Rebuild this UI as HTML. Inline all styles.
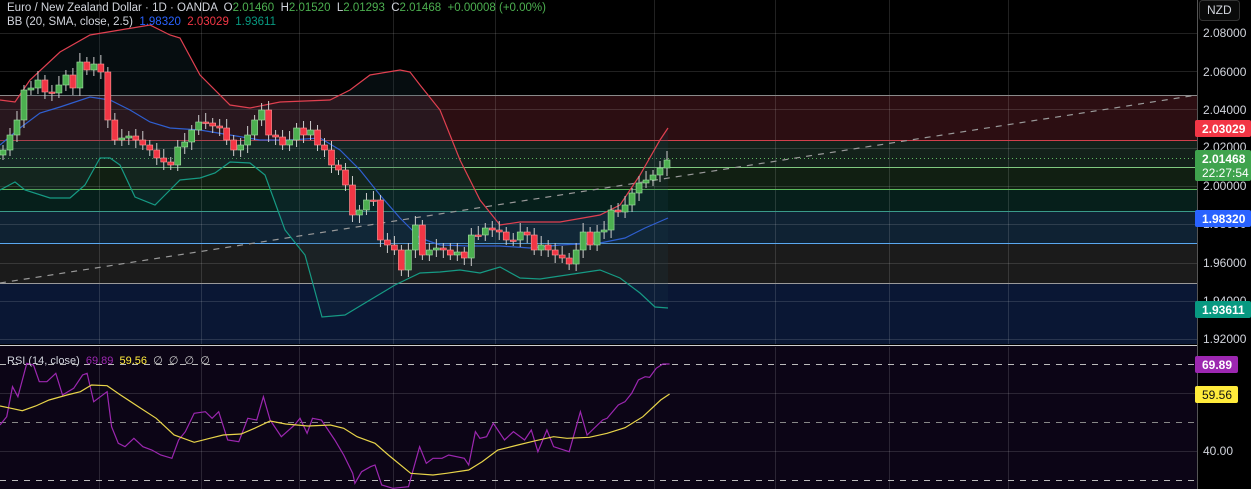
<!DOCTYPE html>
<html><head><meta charset="utf-8"><style>
body{margin:0;background:#000;width:1251px;height:489px;overflow:hidden;font-family:"Liberation Sans",sans-serif}
svg{position:absolute;left:0;top:0}
.leg{position:absolute;left:7px;font-size:11.5px;color:#d1d4dc;white-space:pre}
.ax{font-size:12px;fill:#d1d4dc}
</style></head><body>
<svg id="s" width="1251" height="489" xmlns="http://www.w3.org/2000/svg">
<rect width="1251" height="489" fill="#000"/>
<rect x="0" y="95" width="1197" height="45" fill="#2c0e12"/>
<rect x="0" y="140" width="1197" height="27" fill="#13211a"/>
<rect x="0" y="167" width="1197" height="22" fill="#111f12"/>
<rect x="0" y="189" width="1197" height="22" fill="#061f1b"/>
<rect x="0" y="211" width="1197" height="32" fill="#0f2233"/>
<rect x="0" y="243" width="1197" height="40" fill="#1b1b1b"/>
<rect x="0" y="283" width="1197" height="61" fill="#0a1734"/>
<g id="grid" stroke="#ffffff" stroke-opacity="0.13" stroke-width="1"></g>
<line x1="0" y1="95.5" x2="1197" y2="95.5" stroke="#8a8a8a"/>
<line x1="0" y1="140.5" x2="1197" y2="140.5" stroke="#d0404c"/>
<line x1="0" y1="158.5" x2="1197" y2="158.5" stroke="#5fb85f" stroke-dasharray="1 3"/>
<line x1="0" y1="167.5" x2="1197" y2="167.5" stroke="#80c880"/>
<line x1="0" y1="189.5" x2="1197" y2="189.5" stroke="#5cb85c"/>
<line x1="0" y1="211.5" x2="1197" y2="211.5" stroke="#3a9a8a"/>
<line x1="0" y1="243.5" x2="1197" y2="243.5" stroke="#5aa8f0"/>
<line x1="0" y1="283.5" x2="1197" y2="283.5" stroke="#9a9a9a"/>
<path id="bbfill" fill="#1a3a4a" fill-opacity="0.22"/>
<line x1="0" y1="283" x2="1197" y2="95" stroke="#999" stroke-dasharray="6 6" stroke-width="1.2"/>
<path id="up" fill="none" stroke="#e04050" stroke-width="1.2"/>
<path id="mid" fill="none" stroke="#2f5fd0" stroke-width="1.2"/>
<path id="lo" fill="none" stroke="#169a84" stroke-width="1.2"/>
<g id="candles"></g>
<rect x="0" y="346" width="1197" height="143" fill="#0c0516"/>
<line x1="0" y1="345.5" x2="1251" y2="345.5" stroke="#cfcfcf"/>
<line x1="0" y1="393.5" x2="1197" y2="393.5" stroke="#fff" stroke-opacity="0.13"/>
<line x1="0" y1="451.5" x2="1197" y2="451.5" stroke="#fff" stroke-opacity="0.13"/>
<line x1="0" y1="364.5" x2="1197" y2="364.5" stroke="#bbb" stroke-dasharray="6 6"/>
<line x1="0" y1="422.5" x2="1197" y2="422.5" stroke="#888" stroke-dasharray="6 6"/>
<line x1="0" y1="480.5" x2="1197" y2="480.5" stroke="#bbb" stroke-dasharray="6 6"/>
<g id="rgrid" stroke="#fff" stroke-opacity="0.13"></g>
<path id="rsi" fill="none" stroke="#9c27b0" stroke-width="1.2"/>
<path id="ma" fill="none" stroke="#e8d44a" stroke-width="1.2"/>
<rect x="1197" y="0" width="54" height="489" fill="#000"/>
<line x1="1197.5" y1="0" x2="1197.5" y2="489" stroke="#555"/>
<rect x="1199.5" y="0.5" width="40" height="20" rx="3" fill="#0a0a0a" stroke="#333"/>
<text x="1207" y="14" class="ax" font-size="11">NZD</text>
<text x="1203" y="37" class="ax">2.08000</text>
<text x="1203" y="76" class="ax">2.06000</text>
<text x="1203" y="114" class="ax">2.04000</text>
<text x="1203" y="151" class="ax">2.02000</text>
<text x="1203" y="190" class="ax">2.00000</text>
<text x="1203" y="228" class="ax">1.98000</text>
<text x="1203" y="267" class="ax">1.96000</text>
<text x="1203" y="305" class="ax">1.94000</text>
<text x="1203" y="343" class="ax">1.92000</text>
<text x="1203" y="455" class="ax">40.00</text>
<rect x="1195" y="120" width="56" height="17" rx="2" fill="#f23645"/>
<text x="1202" y="133" class="ax" style="fill:#fff" font-weight="bold">2.03029</text>
<rect x="1195" y="150" width="56" height="31" rx="2" fill="#3fa34d"/>
<text x="1202" y="163" class="ax" style="fill:#fff" font-weight="bold">2.01468</text>
<text x="1202" y="177" class="ax" style="fill:#fff">22:27:54</text>
<rect x="1195" y="210" width="56" height="17" rx="2" fill="#2962ff"/>
<text x="1202" y="223" class="ax" style="fill:#fff" font-weight="bold">1.98320</text>
<rect x="1195" y="301" width="56" height="17" rx="2" fill="#089981"/>
<text x="1202" y="314" class="ax" style="fill:#fff" font-weight="bold">1.93611</text>
<rect x="1195" y="356" width="43" height="17" rx="2" fill="#9c27b0"/>
<text x="1202" y="369" class="ax" style="fill:#fff" font-weight="bold">69.89</text>
<rect x="1195" y="386" width="43" height="17" rx="2" fill="#ffeb3b"/>
<text x="1202" y="399" class="ax" style="fill:#111">59.56</text>
</svg>
<div class="leg" style="top:2px">Euro / New Zealand Dollar · 1D · OANDA  O<span style="color:#4caf50">2.01460</span>  H<span style="color:#4caf50">2.01520</span>  L<span style="color:#4caf50">2.01293</span>  C<span style="color:#4caf50">2.01468</span>  <span style="color:#4caf50">+0.00008 (+0.00%)</span></div>
<div class="leg" style="top:16px">BB (20, SMA, close, 2.5)  <span style="color:#2962ff">1.98320</span>  <span style="color:#f23645">2.03029</span>  <span style="color:#089981">1.93611</span></div>
<div class="leg" style="top:354px;font-size:11px">RSI (14, close)  <span style="color:#9c27b0">69.89</span>  <span style="color:#ffeb3b">59.56</span>  <span style="color:#ccc">∅  ∅  ∅  ∅</span></div>
<script>
const NS="http://www.w3.org/2000/svg";
function P(pts){return pts.map((p,i)=>(i?"L":"M")+p[0]+" "+p[1]).join(" ");}
const g=document.getElementById("grid");
[99,201,299,393,495,654,775,889,1008].forEach(x=>{let l=document.createElementNS(NS,"line");l.setAttribute("x1",x+.5);l.setAttribute("x2",x+.5);l.setAttribute("y1",0);l.setAttribute("y2",344);g.appendChild(l);});
[33,71,109,148,186,224,263,301,339].forEach(y=>{let l=document.createElementNS(NS,"line");l.setAttribute("x1",0);l.setAttribute("x2",1197);l.setAttribute("y1",y+.5);l.setAttribute("y2",y+.5);g.appendChild(l);});
const rg=document.getElementById("rgrid");
[99,201,299,393,495,654,775,889,1008].forEach(x=>{let l=document.createElementNS(NS,"line");l.setAttribute("x1",x+.5);l.setAttribute("x2",x+.5);l.setAttribute("y1",347);l.setAttribute("y2",489);rg.appendChild(l);});
const up=[[0,100],[15,102],[30,80],[60,52],[90,35],[120,30],[150,25],[170,35],[180,38],[200,75],[230,105],[250,108],[280,102],[330,100],[350,90],[370,75],[400,70],[410,72],[420,85],[440,110],[460,160],[480,200],[500,225],[520,222],[560,222],[600,215],[620,205],[640,175],[660,140],[668,128]];
const mid=[[0,145],[20,128],[40,113],[60,107],[90,97],[110,100],[130,110],[150,122],[170,128],[200,130],[230,135],[260,140],[290,140],[320,138],[340,150],[360,170],[380,195],[400,218],[420,238],[440,245],[470,246],[500,246],[530,248],[560,245],[600,243],[625,238],[645,228],[668,218]];
const lo=[[0,190],[15,182],[25,190],[50,198],[70,198],[85,185],[100,158],[110,158],[120,165],[135,197],[155,205],[165,195],[180,180],[200,178],[215,173],[230,162],[250,163],[265,175],[285,230],[305,255],[322,317],[345,315],[370,300],[395,285],[420,273],[440,272],[460,270],[480,273],[500,267],[520,278],[540,279],[560,276],[600,270],[620,278],[640,293],[655,307],[668,308]];
document.getElementById("up").setAttribute("d",P(up));
document.getElementById("mid").setAttribute("d",P(mid));
document.getElementById("lo").setAttribute("d",P(lo));
document.getElementById("bbfill").setAttribute("d",P(up)+" "+P(lo.slice().reverse()).replace("M","L")+" Z");
const cl=[150,135,120,90,88,80,92,93,85,75,88,62,70,64,72,120,140,138,136,140,145,150,158,162,165,147,142,130,122,123,126,128,140,150,145,135,120,110,135,137,145,140,128,135,130,145,150,165,170,185,215,210,200,200,240,245,250,270,250,225,255,250,248,250,255,252,258,235,235,228,230,232,240,240,232,235,250,245,250,255,258,264,250,232,245,232,230,210,212,205,193,183,180,175,168,160];
const n=cl.length,cg=document.getElementById("candles");let h="";
for(let i=0;i<n;i++){const x=3+i*(664/(n-1));const o=i?cl[i-1]:155,c=cl[i];const u=c<o;const col=u?"#4caf50":"#f23645";
const t=Math.min(o,c),b=Math.max(o,c);
h+=`<line x1="${x}" x2="${x}" y1="${t-5-(i%3)*2}" y2="${b+5+(i%4)}" stroke="#ccc" stroke-width="1"/>`;
h+=`<rect x="${x-3}" y="${t}" width="6" height="${Math.max(b-t,1.5)}" fill="${col}" stroke="${u?'#a5e0a5':'#ff9a9a'}" stroke-width="0.6"/>`;}
cg.innerHTML=h;
const rsi=[[0,255],[15,230],[28,140],[40,170],[60,70],[75,75],[88,125],[105,125],[125,100],[140,165],[165,145],[185,105],[195,100],[210,185],[240,155],[250,260],[265,310],[280,320],[300,295],[320,320],[340,330],[360,345],[385,355],[400,300],[415,275],[435,220],[460,215],[475,235],[490,215],[510,300],[535,305],[555,235],[575,240],[590,170],[605,240],[630,290],[660,255],[672,235],[688,280],[700,235],[720,240],[750,300],[770,345],[790,400],[795,430],[810,395],[830,380],[840,375],[855,435],[880,445],[915,440],[940,320],[955,370],[970,355],[990,355],[1005,345],[1040,355],[1050,375],[1065,275],[1075,295],[1090,290],[1105,250],[1130,300],[1150,275],[1175,300],[1190,270],[1205,335],[1225,270],[1240,320],[1275,335],[1300,215],[1315,285],[1350,240],[1360,235],[1385,195],[1400,185],[1415,160],[1430,120],[1445,110],[1455,112],[1470,85],[1485,72],[1500,72]];
const ma=[[0,198],[25,205],[50,212],[80,198],[110,180],[150,165],[180,155],[205,135],[240,137],[270,165],[310,200],[350,235],[390,285],[435,307],[470,295],[500,285],[540,282],[570,265],[605,243],[640,252],[690,258],[740,255],[770,265],[800,290],[840,310],[870,345],[920,400],[970,405],[1000,400],[1050,390],[1080,365],[1115,330],[1160,315],[1200,302],[1240,290],[1270,295],[1320,292],[1360,280],[1400,263],[1440,230],[1480,180],[1500,162]];
const tr=a=>a.map(p=>[(p[0]/2.24).toFixed(1),(340+p[1]/3).toFixed(1)]);
document.getElementById("rsi").setAttribute("d",P(tr(rsi)));
document.getElementById("ma").setAttribute("d",P(tr(ma)));
</script>
</body></html>
